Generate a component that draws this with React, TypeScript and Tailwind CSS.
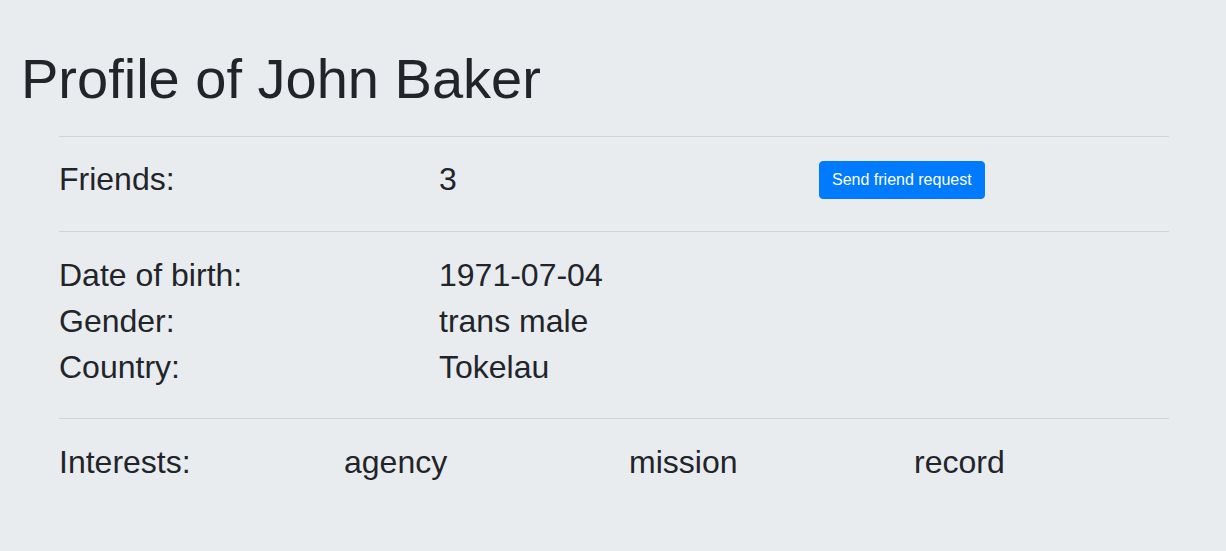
const profile = {
  name: 'John Baker',
  friends: 3,
  details: [
    { label: 'Date of birth:', value: '1971-07-04' },
    { label: 'Gender:', value: 'trans male' },
    { label: 'Country:', value: 'Tokelau' },
  ],
  interests: ['agency', 'mission', 'record'],
};

function Divider() {
  return <hr className="border-0 border-t border-black/10 m-0" />;
}

export default function App() {
  return (
    <div className="min-h-screen bg-[#e9ecef] text-[#212529] font-['Liberation_Sans',Arial,sans-serif]">
      <h1 className="pl-[21px] pt-[45px] mb-[24px] text-[56px] leading-[67px] font-normal">
        Profile of {profile.name}
      </h1>

      <div className="max-w-[1140px] mx-auto pl-[16px] pr-[14px] text-[32px] leading-[46px]">
        <Divider />

        {/* Friends */}
        <div className="grid grid-cols-3 gap-x-[30px] items-center pt-[19px] pb-[29px]">
          <div>Friends:</div>
          <div>{profile.friends}</div>
          <div className="flex">
            <button className="mt-[2px] px-[12px] py-[6px] text-[16px] leading-[24px] text-white bg-[#007bff] border border-[#007bff] rounded-[4px] cursor-pointer">
              Send friend request
            </button>
          </div>
        </div>

        <Divider />

        {/* Details */}
        <div className="pt-[20px] pb-[28px]">
          {profile.details.map((d) => (
            <div key={d.label} className="grid grid-cols-3 gap-x-[30px]">
              <div>{d.label}</div>
              <div>{d.value}</div>
            </div>
          ))}
        </div>

        <Divider />

        {/* Interests */}
        <div className="grid grid-cols-4 gap-x-[30px] pt-[20px]">
          <div>Interests:</div>
          {profile.interests.map((i) => (
            <div key={i}>{i}</div>
          ))}
        </div>
      </div>
    </div>
  );
}
